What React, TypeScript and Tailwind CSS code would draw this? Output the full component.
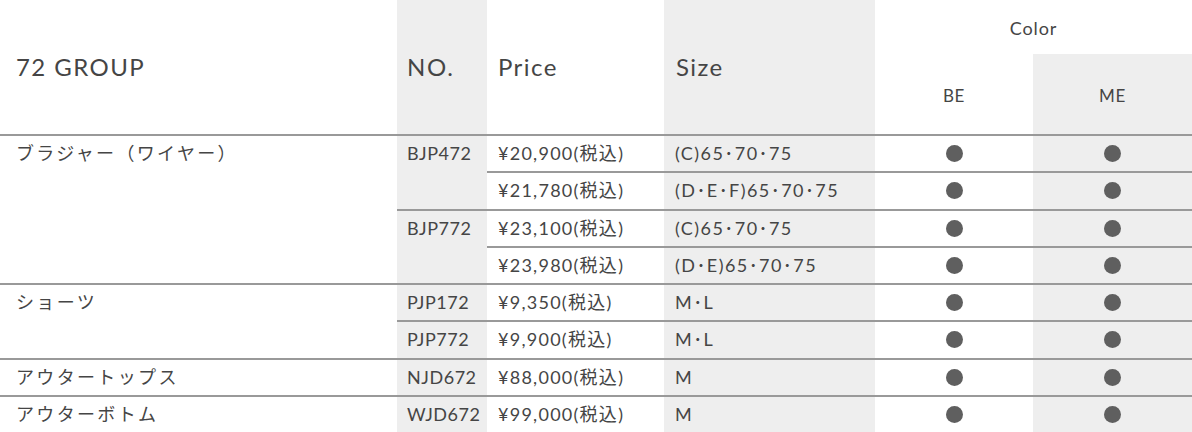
import React from "react";

const FONT = { fontFamily: '"Lato", "Noto Sans CJK JP", sans-serif' };

type Row = {
  name?: string;
  nameSpan?: number;
  no?: string;
  noSpan?: number;
  price: string;
  size: string;
};

const rows: Row[] = [
  { name: "ブラジャー（ワイヤー）", nameSpan: 4, no: "BJP472", noSpan: 2, price: "¥20,900(税込)", size: "(C)65･70･75" },
  { price: "¥21,780(税込)", size: "(D･E･F)65･70･75" },
  { no: "BJP772", noSpan: 2, price: "¥23,100(税込)", size: "(C)65･70･75" },
  { price: "¥23,980(税込)", size: "(D･E)65･70･75" },
  { name: "ショーツ", nameSpan: 2, no: "PJP172", noSpan: 1, price: "¥9,350(税込)", size: "M･L" },
  { no: "PJP772", noSpan: 1, price: "¥9,900(税込)", size: "M･L" },
  { name: "アウタートップス", nameSpan: 1, no: "NJD672", noSpan: 1, price: "¥88,000(税込)", size: "M" },
  { name: "アウターボトム", nameSpan: 1, no: "WJD672", noSpan: 1, price: "¥99,000(税込)", size: "M" },
];

const spanClass: Record<number, string> = {
  1: "row-span-1",
  2: "row-span-2",
  4: "row-span-4",
};

function Dot() {
  return <span className="block h-[17px] w-[17px] rounded-full bg-[#5f5f5f]" />;
}

export default function App() {
  const cells: React.ReactNode[] = [];
  rows.forEach((r, i) => {
    if (r.name) {
      cells.push(
        <div
          key={`n${i}`}
          className={`${spanClass[r.nameSpan!]} border-t-2 border-[#999999] bg-white pl-4 leading-[35.25px] text-[18px] tracking-[0.13em]`}
        >
          {r.name}
        </div>
      );
    }
    if (r.no) {
      cells.push(
        <div
          key={`o${i}`}
          className={`${spanClass[r.noSpan!]} border-t-2 border-[#999999] bg-[#eeeeee] pl-[10px] leading-[35.25px] text-[18px] tracking-[0.03em]`}
        >
          {r.no}
        </div>
      );
    }
    cells.push(
      <div key={`p${i}`} className="border-t-2 border-[#999999] bg-white pl-[11px] leading-[35.25px] text-[18px] tracking-[0.07em]">
        {r.price}
      </div>
    );
    cells.push(
      <div key={`s${i}`} className="border-t-2 border-[#999999] bg-[#eeeeee] pl-[11px] leading-[35.25px] text-[18px] tracking-[0.08em]">
        {r.size}
      </div>
    );
    cells.push(
      <div key={`b${i}`} className="flex items-center justify-center border-t-2 border-[#999999] bg-white">
        <Dot />
      </div>
    );
    cells.push(
      <div key={`m${i}`} className="flex items-center justify-center border-t-2 border-[#999999] bg-[#eeeeee]">
        <Dot />
      </div>
    );
  });

  return (
    <div className="h-[432px] w-[1192px] overflow-hidden bg-white text-[#454545]" style={FONT}>
      <div className="grid grid-cols-[397px_90px_177px_211px_158px_159px] grid-rows-[54px_80px_repeat(8,37.25px)]">
        <div className="row-span-2 flex items-center bg-white pl-4 text-[24px] tracking-[0.06em]">72 GROUP</div>
        <div className="row-span-2 flex items-center bg-[#eeeeee] pl-[10px] text-[24px] tracking-[0.07em]">NO.</div>
        <div className="row-span-2 flex items-center bg-white pl-[11px] text-[24px] tracking-[0.06em]">Price</div>
        <div className="row-span-2 flex items-center bg-[#eeeeee] pl-[12px] text-[24px] tracking-[0.06em]">Size</div>
        <div className="col-span-2 flex items-center justify-center bg-white pt-[2px] text-[18px] tracking-[0.05em]">Color</div>
        <div className="flex items-center justify-center bg-white pt-[4px] text-[17px] tracking-[0.04em]">BE</div>
        <div className="flex items-center justify-center bg-[#eeeeee] pt-[4px] text-[17px] tracking-[0.04em]">ME</div>
        {cells}
      </div>
    </div>
  );
}
